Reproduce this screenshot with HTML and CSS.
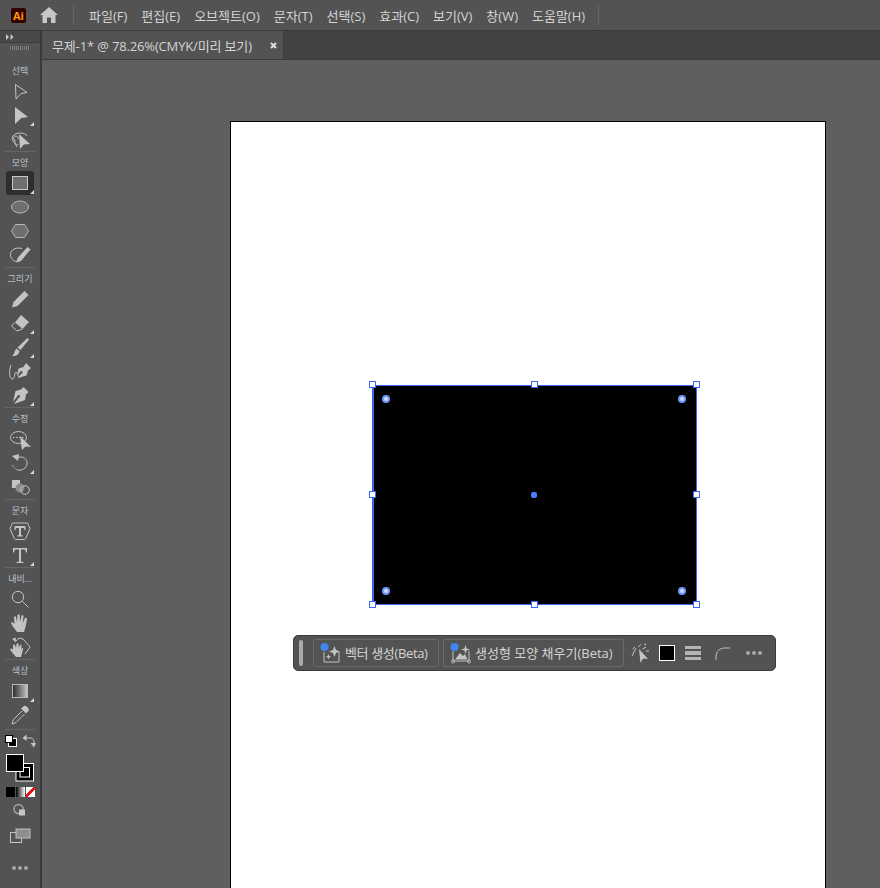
FILE: index.html
```html
<!DOCTYPE html>
<html lang="ko">

<head>
    <meta charset="UTF-8">
    <title>무제-1 - Illustrator</title>
    <link rel="stylesheet" href="styles.css">
</head>

<body>
    <header class="menubar">
        <div class="app-logo">Ai</div>
        <svg class="home-icon" viewBox="0 0 18 16" width="18" height="16">
            <path d="M9 0 L18 8 L15.5 8 L15.5 16 L11 16 L11 10.5 L7 10.5 L7 16 L2.5 16 L2.5 8 L0 8 Z" fill="#c8c8c8" />
        </svg>
        <div class="menu-sep"></div>
        <nav class="menu">
            <span>파일(F)</span>
            <span>편집(E)</span>
            <span>오브젝트(O)</span>
            <span>문자(T)</span>
            <span>선택(S)</span>
            <span>효과(C)</span>
            <span>보기(V)</span>
            <span>창(W)</span>
            <span>도움말(H)</span>
        </nav>
        <div class="menu-sep"></div>
    </header>

    <div class="workspace">
        <aside class="toolbar">
            <div class="toolbar-head">
                <svg viewBox="0 0 8 6" width="8" height="6">
                    <path d="M0 0 L3 3 L0 6 Z M4.5 0 L7.5 3 L4.5 6 Z" fill="#c8c8c8" />
                </svg>
            </div>
            <div class="toolbar-grip"></div>

            <section class="group group-first">
                <div class="group-label">선택</div>
                <div class="tool">
                    <svg viewBox="0 0 24 24"><path class="line" d="M7.5 5.5 L19 13.5 L13 14.5 L8 20 Z" /></svg>
                </div>
                <div class="tool more">
                    <svg viewBox="0 0 24 24"><path class="fill" d="M7 4 L20 14 L13.5 15 L7 21 Z" /></svg>
                </div>
                <div class="tool">
                    <svg viewBox="0 0 24 24">
                        <path class="line" d="M10 18 C5 16 3 12 5 9 C8 5 17 5 19 9 M10 12 a2.5 2 0 1 0 -3 1 C6 16 8 18 9 20" stroke-width="1.3" />
                        <path class="fill" d="M11 7 L22 17 L16 17.5 L12 22 Z" />
                    </svg>
                </div>
            </section>

            <section class="group">
                <div class="group-label">모양</div>
                <div class="tool tool-active more">
                    <svg viewBox="0 0 24 24"><rect x="4.5" y="5.5" width="15" height="13" fill="#6e6e6e" stroke="#c8c8c8" stroke-width="1" /></svg>
                </div>
                <div class="tool">
                    <svg viewBox="0 0 24 24"><ellipse cx="12" cy="12" rx="8.5" ry="6" fill="#6e6e6e" stroke="#b8b8b8" /></svg>
                </div>
                <div class="tool">
                    <svg viewBox="0 0 24 24"><path d="M7.5 5.5 L16.5 5.5 L20.5 12 L16.5 18.5 L7.5 18.5 L3.5 12 Z" fill="#6e6e6e" stroke="#b8b8b8" /></svg>
                </div>
                <div class="tool">
                    <svg viewBox="0 0 24 24">
                        <path class="line" d="M14 5.5 C9 4 2.5 6 2.5 11.5 C2.5 16 6 18.5 9 18.5" stroke-width="1.5" />
                        <path class="fill" d="M19.5 4 L22.5 6.5 L13 18 L8.5 19.5 L9.5 15 Z" />
                    </svg>
                </div>
            </section>

            <section class="group">
                <div class="group-label">그리기</div>
                <div class="tool">
                    <svg viewBox="0 0 24 24"><path class="fill" d="M16.5 4 L20.5 8 L9.5 19 L4 20.5 L5.5 15 Z" /></svg>
                </div>
                <div class="tool more">
                    <svg viewBox="0 0 24 24">
                        <path class="fill" d="M13 4 L21 11 L14.5 18 L7 11.5 Z" />
                        <path class="line" d="M7 11.5 L3.5 15 L9 20 L14.5 18" stroke-width="1.4" />
                    </svg>
                </div>
                <div class="tool more">
                    <svg viewBox="0 0 24 24"><path class="fill" d="M19.5 3 L21 4.5 L12.5 15 L9.5 12.5 Z M8.5 13.5 L11.5 16 C11 20 7.5 21.5 4 21 C6.5 19.5 6.5 15.5 8.5 13.5 Z" /></svg>
                </div>
                <div class="tool">
                    <svg viewBox="0 0 24 24">
                        <path class="line" d="M3 6 C1 11 1 19 4 20 C7 21 6 14 8 13 M8 13 C10 15 11 18 11 19" stroke-width="1.3" />
                        <path class="fill" d="M18 4 L23 9 L20 11.5 L18.5 16.5 L10 19 L13.5 14.5 A1.3 1.3 0 1 0 12 13 L9 17 L10.5 9.5 L15.5 8 Z" />
                    </svg>
                </div>
                <div class="tool more">
                    <svg viewBox="0 0 24 24"><path class="fill" d="M15.5 4 L20.5 9 L18 11.5 L17 17 L6 21 L11 14.5 A1.3 1.3 0 1 0 9.5 13 L5 19 L7.5 8 L13 6.5 Z" /></svg>
                </div>
            </section>

            <section class="group">
                <div class="group-label">수정</div>
                <div class="tool">
                    <svg viewBox="0 0 24 24">
                        <ellipse class="line" cx="10.5" cy="10.5" rx="8" ry="6" stroke-width="1.2" />
                        <path class="line" d="M5 10.5 H17" stroke-dasharray="1.5 1.5" />
                        <path class="fill" d="M12 9 L23 20 L17.5 19.5 L14 23 Z" />
                    </svg>
                </div>
                <div class="tool more">
                    <svg viewBox="0 0 24 24">
                        <path class="line" d="M9 7 C14 4 20 8 19 13 C18.5 17 14 20 10 19" stroke-width="1.4" />
                        <path class="line" d="M10 19 C7 18.5 5 16 4.5 13" stroke-dasharray="1.5 1.5" stroke-width="1.4" />
                        <path class="fill" d="M4 5 L11 3 L10 10 Z" />
                    </svg>
                </div>
                <div class="tool">
                    <svg viewBox="0 0 24 24">
                        <rect class="fill" x="4" y="5" width="8" height="8" />
                        <circle cx="12" cy="13" r="4.5" fill="#8a8a8a" />
                        <circle class="line" cx="17" cy="15" r="4.3" stroke-width="1.3" />
                    </svg>
                </div>
            </section>

            <section class="group">
                <div class="group-label">문자</div>
                <div class="tool">
                    <svg viewBox="0 0 24 24">
                        <path class="line" d="M4.5 4 H19.5 L22 9.5 L18 19 C17.5 20 17 20.5 16 20.5 H8 C7 20.5 6.5 20 6 19 L2 9.5 Z" stroke-width="1.5" />
                        <path class="fill" d="M6.5 7 H17.5 V11 H16.5 L16 9 H13 V16 L14.8 16.5 V17.5 H9.2 V16.5 L11 16 V9 H8 L7.5 11 H6.5 Z" />
                    </svg>
                </div>
                <div class="tool more">
                    <svg viewBox="0 0 24 24"><path class="fill" d="M5 5 H19 V9.5 H18 L17 6.5 H13 V18.5 L15.5 19 V20 H8.5 V19 L11 18.5 V6.5 H7 L6 9.5 H5 Z" /></svg>
                </div>
            </section>

            <section class="group">
                <div class="group-label">내비...</div>
                <div class="tool">
                    <svg viewBox="0 0 24 24">
                        <circle class="line" cx="10" cy="10" r="5.7" stroke-width="1.4" />
                        <path class="line" d="M14.5 14.5 L20.5 20.5" stroke-width="2.4" />
                    </svg>
                </div>
                <div class="tool">
                    <svg viewBox="0 0 24 24"><path class="fill" d="M9 21 C7 18 4 15 3 12 C3.5 11 5 11 6.5 13 L6 6 C6.5 5 8 5 8 6 L9 11 L9.5 4 C10 3 11.5 3 11.7 4 L12 11 L13.5 4.5 C14 4 15.5 4 15.5 5 L14.8 12 L17 7 C17.5 6.5 19 7 19 8 L17.5 16 L16 21 Z" /></svg>
                </div>
                <div class="tool">
                    <svg viewBox="0 0 24 24">
                        <path class="fill" d="M8 22 C6 19 3 17 2 14 C3 13 4 13.5 5 15 L5 10 C6 9 7 9.5 7 10 L8 13 L8.5 9 C9 8 10 8 10.5 9 L10.8 13 L12 10 C13 9.5 13.5 10 13.5 11 L13 15 L14 13 C15 13 15.5 13.5 15 14.5 L13 22 Z" />
                        <path class="line" d="M7 7 L11 3 L15 4 L22 12 L17 19" stroke-width="1.3" />
                        <path class="fill" d="M4 4 L8 2.5 L7.5 7 Z" />
                    </svg>
                </div>
            </section>

            <section class="group">
                <div class="group-label">색상</div>
                <div class="tool more">
                    <svg viewBox="0 0 24 24">
                        <rect x="4.5" y="5.5" width="15" height="13" fill="url(#toolGradient)" stroke="#b8b8b8" />
                    </svg>
                </div>
                <div class="tool">
                    <svg viewBox="0 0 24 24">
                        <path class="fill" d="M16 3 C18 2 22 6 20.5 8 L18 10.5 L13 5.5 Z" />
                        <path class="line" d="M14 8 L5.5 16.5 L4 21 L8 19.5 L16.5 11" stroke-width="1.4" />
                    </svg>
                </div>
            </section>

            <section class="group group-colors">
                <div class="color-row">
                    <svg viewBox="0 0 14 14" width="14" height="14">
                        <rect x="4.5" y="4.5" width="8" height="8" fill="#000" stroke="#fff" />
                        <rect x="1.5" y="1.5" width="7" height="7" fill="#fff" stroke="#000" />
                    </svg>
                    <svg viewBox="0 0 14 14" width="14" height="14">
                        <path class="line" d="M3 4 H9 C11 4 12 6 12 9" stroke-width="2" />
                        <path class="fill" d="M4.5 0.5 V7 L0.5 4 Z M8.5 9 H14 L12 13.5 Z" />
                    </svg>
                </div>
                <svg class="fill-stroke" viewBox="0 0 30 30" width="30" height="30">
                    <rect x="11" y="10.5" width="17.5" height="17.5" fill="#000" stroke="#fff" />
                    <rect x="15" y="14.5" width="9.5" height="9.5" fill="none" stroke="#fff" />
                    <rect x="1.5" y="1.5" width="17" height="17" fill="#000" stroke="#fff" />
                </svg>
                <div class="swatches">
                    <div class="swatch swatch-color"></div>
                    <div class="swatch swatch-gradient"></div>
                    <div class="swatch swatch-none"></div>
                </div>
                <div class="tool tool-small">
                    <svg viewBox="0 0 24 24">
                        <circle cx="10.5" cy="10" r="4.5" fill="none" stroke="#a8a8a8" stroke-width="1.5" />
                        <rect class="fill" x="11" y="10.5" width="6" height="6" />
                    </svg>
                </div>
                <div class="tool tool-screen">
                    <svg viewBox="0 0 24 24">
                        <rect class="line" x="2.5" y="8.5" width="11" height="10" stroke-width="1.2" />
                        <rect x="8" y="5" width="14" height="9" fill="#8e8e8e" stroke="#c0c0c0" />
                    </svg>
                </div>
                <div class="tool-dots"><i></i><i></i><i></i></div>
            </section>

            <svg class="defs" width="0" height="0">
                <linearGradient id="toolGradient">
                    <stop offset="0" stop-color="#2a2a2a" />
                    <stop offset="1" stop-color="#c8c8c8" />
                </linearGradient>
            </svg>
        </aside>

        <main class="main">
            <div class="tabbar">
                <div class="tab">
                    <span>무제-1* @ 78.26%(CMYK/미리 보기)</span>
                    <svg viewBox="0 0 7 7" width="7" height="7">
                        <path d="M1 1 L6 6 M6 1 L1 6" stroke="#e0e0e0" stroke-width="2" />
                    </svg>
                </div>
            </div>

            <div class="canvas">
                <div class="artboard"></div>

                <div class="shape">
                    <i class="handle h-tl"></i><i class="handle h-tc"></i><i class="handle h-tr"></i>
                    <i class="handle h-ml"></i><i class="handle h-mr"></i>
                    <i class="handle h-bl"></i><i class="handle h-bc"></i><i class="handle h-br"></i>
                    <i class="corner c-tl"></i><i class="corner c-tr"></i>
                    <i class="corner c-bl"></i><i class="corner c-br"></i>
                    <i class="center-point"></i>
                </div>

                <div class="taskbar">
                    <div class="taskbar-grip"></div>
                    <div class="task-btn task-btn-vector">
                        <svg viewBox="0 0 24 24" width="24" height="24">
                            <path class="line" d="M5 11 V21 H20 V11" stroke-width="1.4" />
                            <path class="fill" d="M15.5 5 L17 9 L21 10.5 L17 12 L15.5 16 L14 12 L10 10.5 L14 9 Z" />
                            <path class="fill" d="M9.5 13 L10.3 15 L12.3 15.8 L10.3 16.6 L9.5 18.5 L8.7 16.6 L6.7 15.8 L8.7 15 Z" />
                            <circle cx="5.5" cy="6" r="4" fill="#3f86f0" />
                        </svg>
                        <span>벡터 생성(Beta)</span>
                    </div>
                    <div class="task-btn task-btn-fill">
                        <svg viewBox="0 0 24 24" width="24" height="24">
                            <path class="line" d="M4 10 V20 H20 V10" stroke-width="1.2" />
                            <path class="fill" d="M6 18.5 L11 12 L14 15 L16 13 L18.5 18.5 Z" />
                            <circle class="line" cx="4" cy="20.5" r="1.5" />
                            <circle class="line" cx="20" cy="20.5" r="1.5" />
                            <path class="fill" d="M16.5 4 L17.6 7.4 L21 8.5 L17.6 9.6 L16.5 13 L15.4 9.6 L12 8.5 L15.4 7.4 Z" />
                            <circle cx="5.5" cy="6" r="4" fill="#3f86f0" />
                        </svg>
                        <span>생성형 모양 채우기(Beta)</span>
                    </div>
                    <svg class="task-recolor" viewBox="0 0 20 20" width="20" height="20">
                        <path class="fill" d="M8 6 L17 16 L12 15.5 L9.5 20 Z" />
                        <path class="line" d="M1 13 L5 5 M7 4 L10 1.5 M11.5 6 L15 4 M1.5 6 L4 4 M13 1 L15 1.5 M15 8 L18 8" stroke-width="1.5" />
                    </svg>
                    <div class="task-swatch"></div>
                    <svg class="task-stroke" viewBox="0 0 16 14" width="16" height="14">
                        <path d="M0 0 H16 V3 H0 Z M0 5 H16 V9 H0 Z M0 11 H16 V14 H0 Z" fill="#b4b4b4" />
                    </svg>
                    <svg class="task-corner" viewBox="0 0 15 13" width="15" height="13">
                        <path class="line" d="M1 13 V10 C1 4 5 1 10 1 H15" stroke-width="2" />
                    </svg>
                    <div class="task-dots"><i></i><i></i><i></i></div>
                </div>
            </div>
        </main>
    </div>
</body>

</html>
```

FILE: styles.css
```css
html,
body {
    height: 100%;
}

body {
    margin: 0;
    overflow: hidden;
    display: flex;
    flex-direction: column;
    background: #535353;
    color: #d4d4d4;
    font-family: "Open Sans", "Noto Sans CJK KR", sans-serif;
    font-size: 13px;
}

svg {
    display: block;
}

.line {
    fill: none;
    stroke: #c4c4c4;
    stroke-width: 1;
}

.fill {
    fill: #c4c4c4;
}

/* top menu */
.menubar {
    height: 31px;
    flex: none;
    display: flex;
    align-items: center;
    box-sizing: border-box;
    border-bottom: 1px solid #3a3a3a;
    padding-left: 11px;
    background: #535353;
}

.app-logo {
    width: 15px;
    height: 15px;
    background: #330000;
    border-radius: 2px;
    color: #ff9a00;
    font-size: 11px;
    font-weight: 700;
    line-height: 15px;
    text-align: center;
}

.home-icon {
    margin-left: 14px;
}

.menu-sep {
    width: 1px;
    height: 20px;
    margin: 0 0 0 15px;
    background: #656565;
}

.menu {
    display: flex;
    gap: 14px;
    margin-left: 15px;
    margin-right: -2px;
    white-space: nowrap;
}

/* workspace */
.workspace {
    flex: 1;
    display: flex;
    min-height: 0;
}

.toolbar {
    width: 40px;
    flex: none;
    border-right: 2px solid #3a3a3a;
    background: #535353;
    overflow: hidden;
}

.toolbar-head {
    height: 11px;
    display: flex;
    align-items: center;
    padding-left: 6px;
    background: #484848;
    border-bottom: 1px solid #3c3c3c;
}

.toolbar-grip {
    width: 20px;
    height: 4px;
    margin: 3px 0 0 10px;
    background: repeating-linear-gradient(90deg, #7e7e7e 0 1px, transparent 1px 2px);
}

.group {
    border-top: 1px solid #656565;
    margin: 0 5px;
}

.group-first {
    border-top: 0;
    margin-top: 9px;
    padding-top: 1px;
}

.group-label {
    height: 19px;
    margin: 0 -5px;
    color: #b8c4d0;
    font-size: 9px;
    line-height: 21px;
    text-align: center;
    white-space: nowrap;
}

.tool {
    position: relative;
    width: 28px;
    height: 24px;
    margin: 0 1px;
    border-radius: 3px;
    display: flex;
    align-items: center;
    justify-content: center;
}

.tool svg {
    width: 24px;
    height: 24px;
    flex: none;
}

.tool-active {
    background: #2e2e2e;
}

.more::after {
    content: "";
    position: absolute;
    right: 0;
    bottom: 1px;
    border-style: solid;
    border-width: 0 0 4px 4px;
    border-color: transparent transparent #d8d8d8 transparent;
}

/* colour controls */
.group-colors {
    margin-top: 2px;
    padding-top: 3px;
}

.color-row {
    display: flex;
    justify-content: space-between;
    margin: 0 -1px;
    height: 16px;
    align-items: center;
}

.fill-stroke {
    margin: 4px 0 0 0;
}

.swatches {
    display: flex;
    gap: 1px;
    margin: 4px 0 0 1px;
    height: 11px;
}

.swatch {
    width: 9px;
    height: 10px;
    border: 0;
}

.swatch-color {
    background: #000;
}

.swatch-gradient {
    background: linear-gradient(90deg, #000, #fff);
}

.swatch-none {
    background: linear-gradient(135deg, #fff 42%, #e8141c 42%, #e8141c 58%, #fff 58%);
}

.tool-small {
    margin-top: 3px;
    height: 20px;
}

.tool-screen {
    margin-top: 3px;
}

.tool-dots,
.task-dots {
    display: flex;
    gap: 2px;
    justify-content: center;
}

.tool-dots {
    margin-top: 18px;
}

.tool-dots i,
.task-dots i {
    width: 4px;
    height: 4px;
    border-radius: 50%;
    background: #a8a8a8;
}

/* document area */
.main {
    flex: 1;
    min-width: 0;
    display: flex;
    flex-direction: column;
}

.tabbar {
    height: 29px;
    flex: none;
    display: flex;
    box-sizing: border-box;
    border-bottom: 1px solid #3a3a3a;
    background: #424242;
}

.tab {
    width: 242px;
    display: flex;
    align-items: center;
    justify-content: space-between;
    box-sizing: border-box;
    padding: 0 6px 0 10px;
    border-right: 1px solid #3a3a3a;
    background: #535353;
    letter-spacing: -0.15px;
    white-space: nowrap;
}

.canvas {
    position: relative;
    flex: 1;
    overflow: hidden;
    background: #5f5f5f;
}

.artboard {
    position: absolute;
    left: 188px;
    top: 61px;
    width: 594px;
    height: 900px;
    border: 1px solid #000;
    background: #fff;
}

.shape {
    position: absolute;
    left: 330px;
    top: 325px;
    width: 323px;
    height: 218px;
    background: #000;
    border: 1px solid #3b66f5;
    box-shadow: inset 1px 0 #3b66f5;
}

.handle {
    position: absolute;
    width: 5px;
    height: 5px;
    background: #fff;
    border: 1px solid #3b66f5;
    margin: -4px 0 0 -4px;
}

.h-tl, .h-ml, .h-bl { left: 0; }
.h-tc, .h-bc { left: 50%; }
.h-tr, .h-mr, .h-br { left: calc(100% + 1px); }
.h-tl, .h-tc, .h-tr { top: -1px; }
.h-ml, .h-mr { top: 50%; }
.h-bl, .h-bc, .h-br { top: calc(100% + 1px); }

.corner {
    position: absolute;
    width: 4px;
    height: 4px;
    border: 2px solid #6f97ff;
    border-radius: 50%;
    background: #cfdcff;
}

.c-tl { left: 9px; top: 9px; }
.c-tr { right: 10px; top: 9px; }
.c-bl { left: 9px; bottom: 9px; }
.c-br { right: 10px; bottom: 9px; }

.center-point {
    position: absolute;
    left: 158px;
    top: 106px;
    width: 6px;
    height: 6px;
    border-radius: 2px;
    background: #4a7dff;
}

/* contextual task bar */
.taskbar {
    position: absolute;
    left: 251px;
    top: 575px;
    width: 483px;
    height: 36px;
    box-sizing: border-box;
    display: flex;
    align-items: center;
    padding-left: 5px;
    border: 1px solid #3a3a3a;
    border-radius: 5px;
    background: #535353;
}

.taskbar-grip {
    width: 4px;
    height: 26px;
    margin-right: 10px;
    border-radius: 2px;
    background: #ababab;
}

.task-btn {
    height: 28px;
    flex: none;
    display: flex;
    align-items: center;
    gap: 2px;
    box-sizing: border-box;
    padding-left: 5px;
    padding-bottom: 1px;
    margin-right: 4px;
    border: 1px solid #6a6a6a;
    border-radius: 2px;
    white-space: nowrap;
}

.task-btn-vector {
    width: 126px;
    letter-spacing: -0.35px;
}

.task-btn-fill {
    width: 181px;
}

.task-recolor {
    flex: none;
    margin-left: 3px;
}

.task-swatch {
    width: 14px;
    height: 14px;
    margin: 0 10px 0 8px;
    border: 1px solid #fff;
    background: #000;
}

.task-corner {
    margin-left: 14px;
}

.task-dots {
    margin-left: 16px;
}
```
